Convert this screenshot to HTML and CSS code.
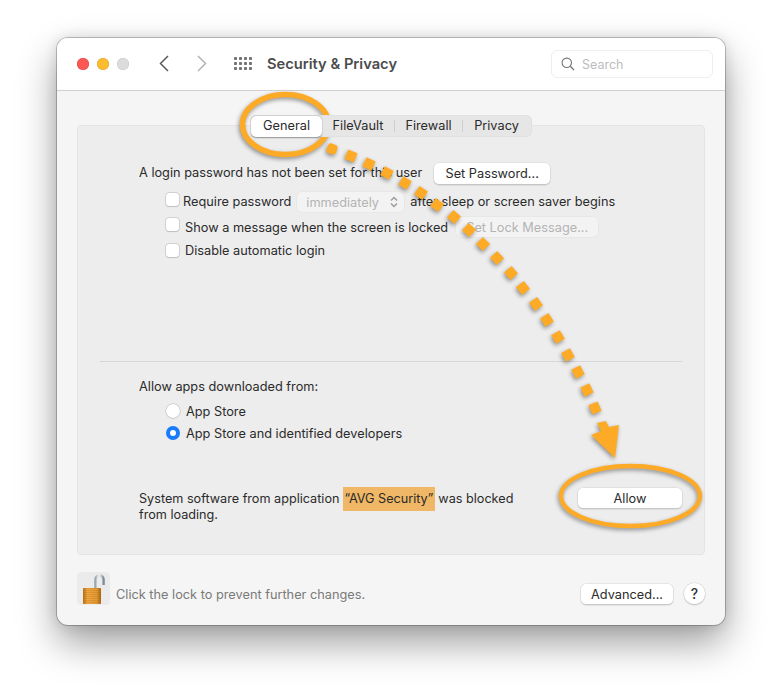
FILE: index.html
```html
<!DOCTYPE html>
<html lang="en">
<head>
<meta charset="utf-8">
<title>Security &amp; Privacy</title>
<link rel="stylesheet" href="styles.css">
</head>
<body>
<main class="window">
  <header class="titlebar">
    <div class="lights">
      <span class="light red"></span><span class="light yellow"></span><span class="light grey"></span>
    </div>
    <svg class="chev chev-back" width="10" height="17" viewBox="0 0 10 17"><path d="M9 1 1.500 8.500 9 16" fill="none" stroke="#5c5c5c" stroke-width="1.500"/></svg>
    <svg class="chev" width="10" height="17" viewBox="0 0 10 17"><path d="M1 1 8.500 8.500 1 16" fill="none" stroke="#b4b4b4" stroke-width="1.500"/></svg>
    <svg class="grid-icon" width="18" height="14" viewBox="0 0 18 14" fill="#757575">
      <rect x="0" y="0" width="3" height="3" rx=".7"/><rect x="5" y="0" width="3" height="3" rx=".7"/><rect x="10" y="0" width="3" height="3" rx=".7"/><rect x="15" y="0" width="3" height="3" rx=".7"/>
      <rect x="0" y="5" width="3" height="3" rx=".7"/><rect x="5" y="5" width="3" height="3" rx=".7"/><rect x="10" y="5" width="3" height="3" rx=".7"/><rect x="15" y="5" width="3" height="3" rx=".7"/>
      <rect x="0" y="10" width="3" height="3" rx=".7"/><rect x="5" y="10" width="3" height="3" rx=".7"/><rect x="10" y="10" width="3" height="3" rx=".7"/><rect x="15" y="10" width="3" height="3" rx=".7"/>
    </svg>
    <h1 class="title">Security &amp; Privacy</h1>
    <div class="search">
      <svg width="14" height="14" viewBox="0 0 14 14"><circle cx="5.800" cy="5.800" r="4.700" fill="none" stroke="#777" stroke-width="1.100"/><path d="M9.300 9.300 13 13" stroke="#777" stroke-width="1.300"/></svg>
      <span class="search-label">Search</span>
    </div>
  </header>

  <div class="content">
    <nav class="tabs">
      <span class="tab tab-active">General</span>
      <span class="tab">FileVault</span><i class="tab-sep"></i>
      <span class="tab">Firewall</span><i class="tab-sep"></i>
      <span class="tab">Privacy</span>
    </nav>

    <section class="panel">
      <div class="row row-password">
        <span class="lift-2">A login password has not been set for this user</span>
        <button class="btn btn-password">Set Password...</button>
      </div>
      <div class="row row-check row-require">
        <span class="check"></span>
        <span class="label-tight lift-2">Require password</span>
        <span class="select">immediately
          <svg width="8" height="12" viewBox="0 0 8 12"><path d="M1 4.500 4 1.500 7 4.500M1 7.500 4 10.500 7 7.500" fill="none" stroke="#999" stroke-width="1.400"/></svg>
        </span>
        <span class="lift-2">after sleep or screen saver begins</span>
      </div>
      <div class="row row-check row-message">
        <span class="check"></span>
        <span>Show a message when the screen is locked</span>
        <button class="btn btn-disabled">Set Lock Message...</button>
      </div>
      <div class="row row-check row-auto">
        <span class="check check-even"></span>
        <span>Disable automatic login</span>
      </div>

      <hr class="divider">

      <div class="row row-allow">Allow apps downloaded from:</div>
      <div class="row row-radio"><span class="radio"></span><span>App Store</span></div>
      <div class="row row-radio"><span class="radio radio-on"></span><span>App Store and identified developers</span></div>

      <div class="blocked">
        <p class="blocked-text"><span>System software from application</span> <mark class="hl">“AVG Security”</mark> <span>was blocked</span> <span>from loading.</span></p>
        <button class="btn btn-allow">Allow</button>
      </div>
    </section>

    <footer class="footer">
      <span class="lock">
        <svg width="33" height="33" viewBox="0 0 33 33">
          <defs>
            <linearGradient id="shackle" x1="0" x2="1" y1="0" y2="0">
              <stop offset="0" stop-color="#9aa8b0"/><stop offset=".45" stop-color="#f4f7f8"/><stop offset="1" stop-color="#7f8e96"/>
            </linearGradient>
            <linearGradient id="body" x1="0" x2="1" y1="0" y2="0">
              <stop offset="0" stop-color="#b96f15"/><stop offset=".25" stop-color="#f0a63f"/><stop offset=".75" stop-color="#e39a33"/><stop offset="1" stop-color="#ad6512"/>
            </linearGradient>
            <pattern id="ribs" width="3" height="2" patternUnits="userSpaceOnUse"><rect width="3" height="1" fill="#7a4300" fill-opacity=".14"/></pattern>
          </defs>
          <path d="M18.500 17V7.400a4 4 0 0 1 8 0V13" fill="none" stroke="url(#shackle)" stroke-width="2.600"/>
          <rect x="6" y="16" width="18" height="16" rx="1" fill="url(#body)"/>
          <rect x="6" y="16" width="18" height="16" rx="1" fill="url(#ribs)"/>
        </svg>
      </span>
      <span class="lock-text">Click the lock to prevent further changes.</span>
      <button class="btn btn-advanced">Advanced...</button>
      <button class="help">?</button>
    </footer>
  </div>
</main>

<svg class="notes" width="780" height="698" viewBox="0 0 780 698" fill="#fdaa26">
  <ellipse cx="285.500" cy="124.500" rx="43" ry="30" fill="none" stroke="#fdaa26" stroke-width="5.500"/>
  <ellipse cx="630.500" cy="496" rx="69.500" ry="30" fill="none" stroke="#fdaa26" stroke-width="4.500"/>
  <rect x="327" y="144" width="10" height="10" rx="3" transform="rotate(20 332 149)"/>
  <rect x="346" y="151" width="10" height="10" transform="rotate(22 351 156)"/>
  <rect x="364" y="159" width="10" height="10" transform="rotate(25 369 164)"/>
  <rect x="382" y="168" width="10" height="10" transform="rotate(28 387 173)"/>
  <rect x="400" y="178" width="10" height="10" transform="rotate(30 405 183)"/>
  <rect x="416" y="188" width="10" height="10" transform="rotate(33 421 193)"/>
  <rect x="432" y="200" width="10" height="10" transform="rotate(36 437 205)"/>
  <rect x="449" y="212" width="10" height="10" transform="rotate(40 454 217)"/>
  <rect x="464" y="225" width="10" height="10" transform="rotate(43 469 230)"/>
  <rect x="478" y="239" width="10" height="10" transform="rotate(45 483 244)"/>
  <rect x="492" y="253" width="10" height="10" transform="rotate(47 497 258)"/>
  <rect x="506" y="268" width="10" height="10" transform="rotate(50 511 273)"/>
  <rect x="518" y="283" width="10" height="10" transform="rotate(52 523 288)"/>
  <rect x="531" y="299" width="10" height="10" transform="rotate(55 536 304)"/>
  <rect x="542" y="315" width="10" height="10" transform="rotate(57 547 320)"/>
  <rect x="553" y="332" width="10" height="10" transform="rotate(60 558 337)"/>
  <rect x="563" y="350" width="10" height="10" transform="rotate(62 568 355)"/>
  <rect x="573" y="367" width="10" height="10" transform="rotate(63 578 372)"/>
  <rect x="582" y="385" width="10" height="10" transform="rotate(65 587 390)"/>
  <rect x="590" y="403" width="10" height="10" transform="rotate(67 595 408)"/>
  <path d="M597 423 606 421 609 427 619 425 615 458 591 435 601 431Z"/>
</svg>
</body>
</html>
```
FILE: styles.css
```css
* { box-sizing: border-box; }
html, body { margin: 0; height: 698px; overflow: hidden; }
body {
  background: #fff;
  padding: 38px 55px 0 57px;
  font-family: Inter, "Liberation Sans", sans-serif;
  font-size: 12.750px;
  color: #2b2b2b;
}
.window {
  width: 668px;
  height: 587px;
  border-radius: 11px;
  background: #f5f5f5;
  box-shadow: 0 0 0 1px rgba(0,0,0,.22), 0 18px 38px rgba(0,0,0,.38), 0 0 14px rgba(0,0,0,.12);
  display: flex;
  flex-direction: column;
  overflow: hidden;
}
.titlebar {
  height: 53px;
  flex: none;
  background: #fff;
  border-bottom: 1px solid #d0d0d0;
  display: flex;
  align-items: center;
  padding: 0 12px 1px 20px;
}
.lights { display: flex; gap: 8px; margin-right: 30px; }
.light { width: 12px; height: 12px; border-radius: 50%; }
.red { background: #fc5753; box-shadow: inset 0 0 0 .5px #df4744; }
.yellow { background: #fdbc2e; box-shadow: inset 0 0 0 .5px #de9f34; }
.grey { background: #dcdcdc; box-shadow: inset 0 0 0 .5px #c6c6c6; }
.chev { margin-right: 27px; flex: none; }
.chev-back { margin-right: 28px; }
.grid-icon { flex: none; margin-right: 15px; }
.title {
  margin: 0;
  font-size: 14.700px;
  font-weight: 600;
  color: #4c4c4c;
}
.search {
  margin-left: auto;
  width: 162px;
  height: 28px;
  border: 1px solid #eee;
  border-radius: 6px;
  display: flex;
  align-items: center;
  gap: 7px;
  padding-left: 9px;
  color: #bcbcbc;
  font-size: 12.500px;
}
.search-label { margin-top: 2px; }
.content {
  flex: 1;
  display: flex;
  flex-direction: column;
  padding: 24px 20px 0;
}
.tabs {
  position: relative;
  z-index: 1;
  align-self: center;
  height: 22px;
  width: 282px;
  display: flex;
  align-items: center;
  background: #e6e6e6;
  border-radius: 6px;
  box-shadow: inset 0 0 0 .5px #dcdcdc;
}
.tab { color: #2b2b2b; line-height: 20px; text-align: center; }
.tab:nth-of-type(2) { width: 72px; }
.tab:nth-of-type(3) { width: 67px; }
.tab:nth-of-type(4) { width: 69px; padding-right: 2px; }
.tab-active {
  width: 71px;
  height: 21px;
  margin-left: 1px;
  background: #fff;
  border-radius: 5px;
  box-shadow: 0 .5px 1.500px rgba(0,0,0,.4);
}
.tab-sep { width: 1px; height: 12px; background: #cfcfcf; flex: none; }
.panel {
  margin-top: -12px;
  height: 430px;
  flex: none;
  background: #ededed;
  border: 1px solid #e4e4e4;
  border-radius: 4px;
  padding: 37px 22px 0 61px;
}
.row { display: flex; align-items: center; height: 22px; white-space: nowrap; }
.row-password { height: 21px; margin-bottom: 7px; gap: 12px; }
.lift-2 { margin-top: -2px; }
.row-check { margin-left: 27px; }
.row-require { margin-bottom: 3px; }
.row-message { margin-bottom: 1px; }
.check {
  width: 13px;
  height: 13px;
  flex: none;
  margin-right: 6px;
  margin-top: -5px;
  background: #fff;
  border-radius: 3px;
  box-shadow: 0 0 0 .5px #b5b5b5, 0 .5px 1px rgba(0,0,0,.15);
}
.check-even { margin-top: 0; }
.label-tight { margin-left: -2px; }
.select {
  margin: 0 6px;
  width: 107px;
  height: 20px;
  background: #f3f3f3;
  border-radius: 5px;
  box-shadow: 0 0 0 .5px #e2e2e2;
  color: #b4b4b4;
  display: flex;
  align-items: center;
  justify-content: space-between;
  padding: 0 6px 0 9px;
}
.btn {
  font: inherit;
  color: #2b2b2b;
  height: 20px;
  padding: 0;
  border: 0;
  background: #fff;
  border-radius: 5px;
  box-shadow: 0 0 0 .5px #d8d8d8, 0 1px 1.500px rgba(0,0,0,.3);
  flex: none;
}
.btn-password { width: 116px; height: 21px; }
.btn-disabled {
  width: 142px;
  margin-left: 8px;
  background: #f3f3f3;
  color: #b4b4b4;
  box-shadow: 0 0 0 .5px #e2e2e2;
}
.divider {
  margin: 100px 0 0 -39px;
  width: 582px;
  height: 1px;
  border: 0;
  background: #d6d6d6;
}
.row-allow { margin-top: 13px; margin-bottom: 3px; }
.row-radio { margin-left: 27px; gap: 6px; }
.radio {
  width: 14px;
  height: 14px;
  flex: none;
  border-radius: 50%;
  background: #fff;
  box-shadow: 0 0 0 .5px #b5b5b5, 0 .5px 1px rgba(0,0,0,.15);
}
.radio-on {
  background: #fff;
  border: 4px solid #1a7cfa;
  box-shadow: none;
}
.blocked {
  display: flex;
  justify-content: space-between;
  align-items: flex-start;
  margin-top: 47px;
}
.blocked-text { margin: 0; width: 385px; line-height: 16px; font-size: 12.650px; }
.hl { background: #f0b866; color: inherit; padding: 4px 1.500px 5px; }
.btn-allow { width: 104px; margin-top: -3px; }
.footer {
  display: flex;
  align-items: flex-end;
  height: 33px;
  margin-top: 17px;
}
.lock { width: 33px; height: 33px; background: #ebebeb; border-radius: 4px; margin-right: 6px; flex: none; display: flex; }
.lock-text { color: #7a7a7a; line-height: 20px; }
.btn-advanced { width: 92px; margin-left: auto; margin-bottom: 1px; }
.help {
  font: inherit;
  font-size: 14px;
  font-weight: 500;
  color: #333;
  width: 21px;
  height: 21px;
  margin-left: 11px;
  margin-bottom: 1px;
  padding: 0;
  border: 0;
  border-radius: 50%;
  background: #fff;
  box-shadow: 0 0 0 .5px #d8d8d8, 0 1px 1.500px rgba(0,0,0,.3);
  flex: none;
}
.notes {
  position: absolute;
  left: 0;
  top: 0;
  pointer-events: none;
  filter: drop-shadow(-1px 2px 2px rgba(0,0,0,.4));
}
```
